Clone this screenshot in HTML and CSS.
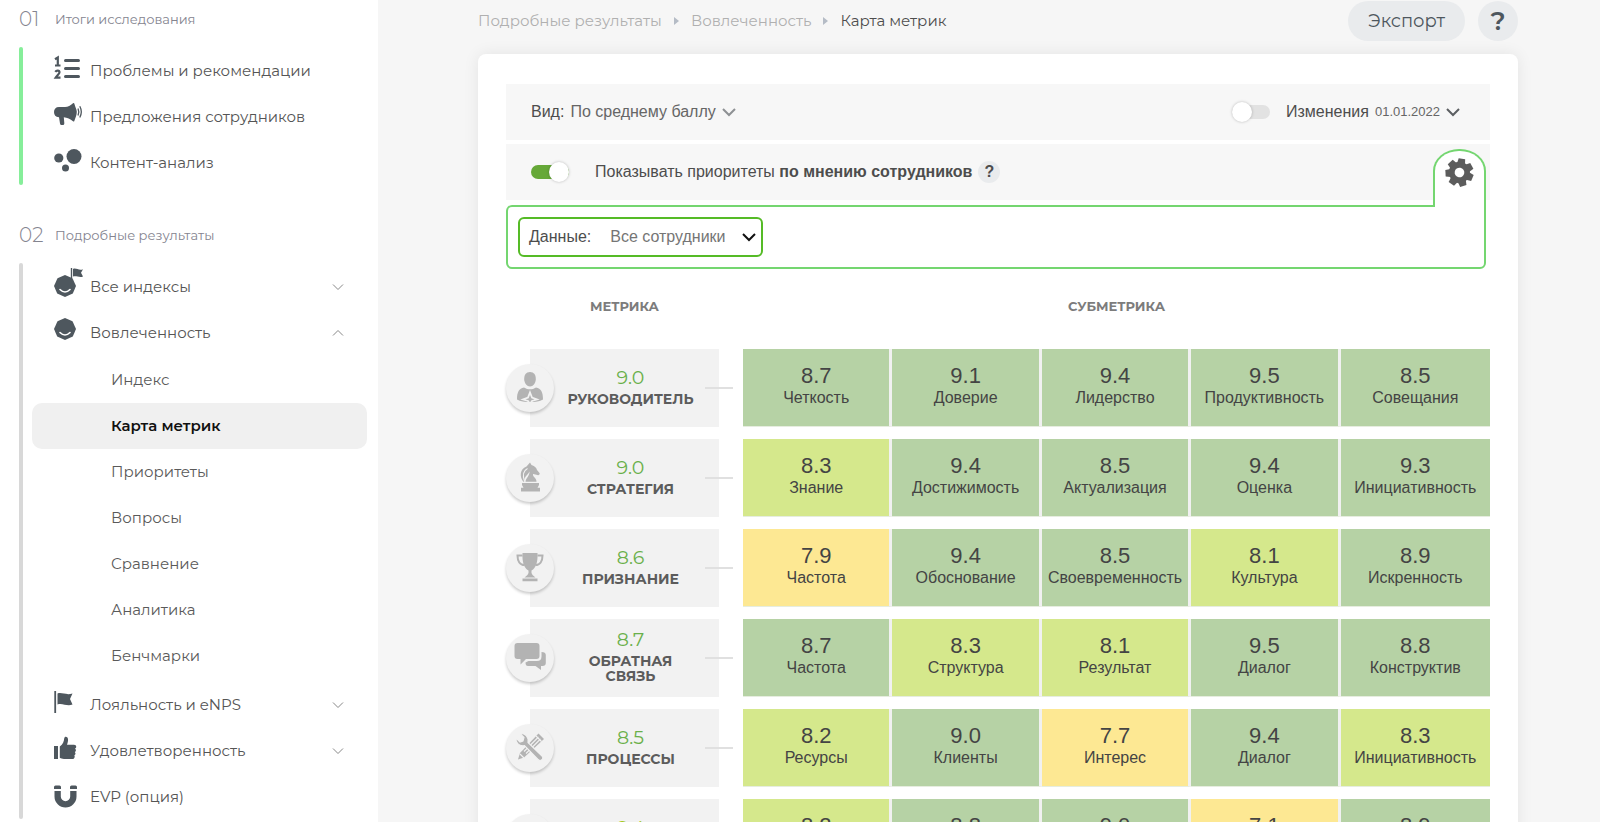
FILE: index.html
```html
<!DOCTYPE html>
<html lang="ru">
<head>
<meta charset="utf-8">
<meta name="viewport" content="width=device-width, initial-scale=1">
<title>Карта метрик</title>
<link rel="stylesheet" href="styles.css">
</head>
<body>
<div class="app">
  <nav class="sidebar" aria-label="Разделы">
    <section class="section">
      <h2 class="section-title"><span class="section-num">01</span>Итоги исследования</h2>
      <ul class="menu menu-active">
        <li><a class="item" href="#"><svg class="icon" viewBox="0 0 28 24"><g stroke="#4e575e" stroke-width="3" stroke-linecap="round"><path d="M11.500 4.500H24.500M11.500 12.500H24.500M11.500 20.500H24.500"/></g><path d="M1 3.200L3.800 1.500V9.300M1 9.500H6.500M1.300 15.800C2.500 14 5.500 14.200 5.500 16.300C5.500 18 3.500 19 1.700 21.700H6.500" fill="none" stroke="#4e575e" stroke-width="2.200"/></svg>Проблемы и рекомендации</a></li>
        <li><a class="item" href="#"><svg class="icon" viewBox="0 0 28 24"><path d="M5 5H11C14 5 16.500 3.500 19 1.200C19.500.8 20 .8 20.300 1.500C21.300 5 22.500 7 22.800 9.800C22.800 13 21.600 15.500 20.300 19C20 19.800 19.500 19.600 19 19.200C16.500 17 13 15.500 9.800 15.200L10.300 21C10.400 22.600 9.800 23 8.800 23H7.500C6.500 23 6.200 22.400 6 21.500L5 15.300C1.600 15 0 13 0 10C0 7 1.800 5 5 5Z" fill="#4e575e"/><path d="M24 6.500Q25.600 9.800 24 13.500M25.800 4.300Q28.800 9.800 25.800 15.500" fill="none" stroke="#4e575e" stroke-width="1.300"/></svg>Предложения сотрудников</a></li>
        <li><a class="item" href="#"><svg class="icon" viewBox="0 0 28 24"><g fill="#4e575e"><circle cx="4.800" cy="10" r="4.600"/><circle cx="20" cy="8.500" r="7.500"/><circle cx="11.500" cy="20" r="3.500"/></g></svg>Контент-анализ</a></li>
      </ul>
    </section>
    <section class="section">
      <h2 class="section-title"><span class="section-num">02</span>Подробные результаты</h2>
      <ul class="menu">
        <li><a class="item" href="#"><svg class="icon" viewBox="0 0 28 24"><path d="M11 3L18.500 6.200L22 14L18.800 21.500L11 25L3.200 21.500L0 14L3.500 6.200Z" fill="#4e575e"/><path d="M6 17.500Q11 22.500 16 17.500" fill="none" stroke="#fff" stroke-width="1.600" stroke-linecap="round"/><path d="M17.500 6V-4" stroke="#4e575e" stroke-width="1.400"/><path d="M19 -3C22 -4.500 25 -1 29 -2.800L27 .8L29 4.500C25.500 6 22.500 3.500 19 4.500Z" fill="#4e575e"/></svg>Все индексы<svg class="fold" viewBox="0 0 12 12"><path d="M1 3.500L6 8.500L11 3.500"/></svg></a></li>
        <li><a class="item" href="#"><svg class="icon" viewBox="0 0 28 24"><path d="M11 0L18.500 3.200L22 11L18.800 18.500L11 22L3.200 18.500L0 11L3.500 3.200Z" fill="#4e575e"/><path d="M6 14.500Q11 19.500 16 14.500" fill="none" stroke="#fff" stroke-width="1.600" stroke-linecap="round"/></svg>Вовлеченность<svg class="fold" viewBox="0 0 12 12"><path d="M1 8.500L6 3.500L11 8.500"/></svg></a>
          <ul class="submenu">
            <li><a class="subitem" href="#">Индекс</a></li>
            <li><a class="subitem current" href="#" aria-current="page">Карта метрик</a></li>
            <li><a class="subitem" href="#">Приоритеты</a></li>
            <li><a class="subitem" href="#">Вопросы</a></li>
            <li><a class="subitem" href="#">Сравнение</a></li>
            <li><a class="subitem" href="#">Аналитика</a></li>
            <li><a class="subitem" href="#">Бенчмарки</a></li>
          </ul></li>
        <li><a class="item" href="#"><svg class="icon" viewBox="0 0 28 24"><path d="M1.200 1V23" stroke="#4e575e" stroke-width="1.800"/><path d="M3.500 3.500C8 2 12 5.500 18.500 3.500L16 9L18.500 14.500C13 17 8.500 12.500 3.500 14.500Z" fill="#4e575e"/></svg>Лояльность и eNPS<svg class="fold" viewBox="0 0 12 12"><path d="M1 3.500L6 8.500L11 3.500"/></svg></a></li>
        <li><a class="item" href="#"><svg class="icon" viewBox="0 0 28 24"><path d="M0 10H4V23H0ZM5.800 10.500C9 8.500 10 5 10.200 2.500C10.400 0 13.500 0 14 3C14.300 5 13.500 7 13 8.800H20C22.800 8.800 22.800 12.300 21 12.600C22.500 13.500 22 15.800 20.800 16C22 17 21.500 19 20.300 19.200C21.300 20.500 20.300 23 18.500 23H10C8 23 7 22.300 5.800 21.800Z" fill="#4e575e"/></svg>Удовлетворенность<svg class="fold" viewBox="0 0 12 12"><path d="M1 3.500L6 8.500L11 3.500"/></svg></a></li>
        <li><a class="item" href="#"><svg class="icon" viewBox="0 0 28 24"><path d="M0 7V5Q0 3.500 1.500 3.500H5.500Q7 3.500 7 5V7ZM16 7V5Q16 3.500 17.500 3.500H21.500Q23 3.500 23 5V7ZM.5 9H6.800V14.500A4.700 4.700 0 0 0 16.200 14.500V9H22.500V14.500A11 11 0 0 1 .5 14.500Z" fill="#4e575e"/></svg>EVP (опция)</a></li>
      </ul>
    </section>
  </nav>

  <main class="main">
    <header class="topbar">
      <nav class="crumbs" aria-label="Навигация">
        <a href="#">Подробные результаты</a><span class="sep"></span><a href="#">Вовлеченность</a><span class="sep"></span><span class="here">Карта метрик</span>
      </nav>
      <button class="pill" type="button">Экспорт</button>
      <button class="pill round" type="button" aria-label="Помощь">?</button>
    </header>

    <div class="card">
      <div class="bar">
        <span>Вид:</span>
        <button class="drop" type="button">По среднему баллу<svg class="chev" viewBox="0 0 14 10"><path d="M1 2L7 8L13 2"/></svg></button>
        <label class="toggle-label end"><input class="toggle" type="checkbox">Изменения</label>
        <button class="drop date" type="button">01.01.2022<svg class="chev dark" viewBox="0 0 14 10"><path d="M1 2L7 8L13 2"/></svg></button>
      </div>
      <div class="bar">
        <label class="toggle-label wide"><input class="toggle" type="checkbox" checked><span>Показывать приоритеты <b>по мнению сотрудников</b></span></label>
        <button class="hint" type="button" aria-label="Подсказка">?</button>
      </div>
      <div class="filters">
        <button class="tab" type="button" aria-label="Настройки"><svg viewBox="-15 -15 30 30"><g fill="#5c5c5c" transform="rotate(10)"><circle r="8" fill="none" stroke="#5c5c5c" stroke-width="6"/><path d="M-4.200-9L-3.400-14.500H3.400L4.200-9Z"/><path d="M-4.200-9L-3.400-14.500H3.400L4.200-9Z" transform="rotate(51.400)"/><path d="M-4.200-9L-3.400-14.500H3.400L4.200-9Z" transform="rotate(102.900)"/><path d="M-4.200-9L-3.400-14.500H3.400L4.200-9Z" transform="rotate(154.300)"/><path d="M-4.200-9L-3.400-14.500H3.400L4.200-9Z" transform="rotate(205.700)"/><path d="M-4.200-9L-3.400-14.500H3.400L4.200-9Z" transform="rotate(257.100)"/><path d="M-4.200-9L-3.400-14.500H3.400L4.200-9Z" transform="rotate(308.600)"/></g></svg></button>
        <div class="select-box">
          <label for="data">Данные:</label>
          <select id="data"><option>Все сотрудники</option></select>
          <svg class="chev black" viewBox="0 0 14 10"><path d="M1 2L7 8L13 2"/></svg>
        </div>
      </div>

      <table class="map">
        <thead>
          <tr><th class="col-metric" scope="col">МЕТРИКА</th><th class="col-sub" scope="colgroup" colspan="5">СУБМЕТРИКА</th></tr>
        </thead>
        <tbody>
          <tr>
            <th scope="row"><div class="metric"><span class="badge"><svg viewBox="0 0 32 32"><path d="M16 0C20 0 22 3 21.800 7.500C21.500 11.500 19 14.500 16 14.500C13 14.500 10.500 11.500 10.200 7.500C10 3 12 0 16 0Z"/><path d="M10 15.500C12 16.800 14 17.300 16 17.300C18 17.300 20 16.800 22 15.500C27 16.500 29 20 29 27.500C26 29.500 21 30 16 30C11 30 6 29.500 3 27.500C3 20 5 16.500 10 15.500Z"/><path d="M16 20.500L18 25.500L23 27.500L18 29L16 32L14 29L9 27.500L14 25.500Z" fill="#b3b3b3" stroke="#f2f2f2" stroke-width="1.800"/></svg></span><span class="score">9.0</span><span class="name">РУКОВОДИТЕЛЬ</span></div></th>
            <td class="good"><b>8.7</b>Четкость</td><td class="good"><b>9.1</b>Доверие</td><td class="good"><b>9.4</b>Лидерство</td><td class="good"><b>9.5</b>Продуктивность</td><td class="good"><b>8.5</b>Совещания</td>
          </tr>
          <tr>
            <th scope="row"><div class="metric"><span class="badge"><svg viewBox="0 0 32 32"><path d="M16 .5L17.500 3C21 4 22.500 6 23 8L25.700 11.300C25.500 13.500 24 13.500 22.500 12.700L19 12C18.500 15 22.500 15.500 22.500 19.800H11.500C12 15.500 15.500 14.500 15.500 9.500C14.500 12 12 13.500 10.800 16L10.200 19.500L9.300 19.800C5.500 15 5.500 7 12.500 4.500Z"/><path d="M13.500 6.500C9 9 8.700 14 10.500 19" fill="none" stroke="#f2f2f2" stroke-width="1.100"/><path d="M8 21H25V23L23.500 25.700H26V29.500H7V25.700H9.500L8 23Z"/></svg></span><span class="score">9.0</span><span class="name">СТРАТЕГИЯ</span></div></th>
            <td class="fair"><b>8.3</b>Знание</td><td class="good"><b>9.4</b>Достижимость</td><td class="good"><b>8.5</b>Актуализация</td><td class="good"><b>9.4</b>Оценка</td><td class="good"><b>9.3</b>Инициативность</td>
          </tr>
          <tr>
            <th scope="row"><div class="metric"><span class="badge"><svg viewBox="0 0 32 32"><path d="M8.500 1H23.500C24 10 22 16 17.500 18.500V21Q18 23.500 21.500 25.500H10.500Q14 23.500 14.500 21V18.500C10 16 8 10 8.500 1ZM8.500 26.500H23.500V29.300H8.500Z"/><path d="M8.500 3.500H3.500C3.500 9 6 13 10.500 13M23.500 3.500H28.500C28.500 9 26 13 21.500 13" fill="none" stroke="#b3b3b3" stroke-width="2"/></svg></span><span class="score">8.6</span><span class="name">ПРИЗНАНИЕ</span></div></th>
            <td class="mid"><b>7.9</b>Частота</td><td class="good"><b>9.4</b>Обоснование</td><td class="good"><b>8.5</b>Своевременность</td><td class="fair"><b>8.1</b>Культура</td><td class="good"><b>8.9</b>Искренность</td>
          </tr>
          <tr>
            <th scope="row"><div class="metric"><span class="badge"><svg viewBox="0 0 32 32"><path d="M3.500 1H22.500Q25.500 1 25.500 4V14Q25.500 17 22.500 17H12L6.500 22.500V17H3.500Q.5 17 .5 14V4Q.5 1 3.500 1Z"/><path d="M27.500 10Q31.800 10 31.800 13V21Q31.800 24 28.500 24H27V28L21.500 24H14Q11.500 24 11.500 20.500L14.500 19H23Q27.500 19 27.500 14.500Z"/></svg></span><span class="score">8.7</span><span class="name">ОБРАТНАЯ СВЯЗЬ</span></div></th>
            <td class="good"><b>8.7</b>Частота</td><td class="fair"><b>8.3</b>Структура</td><td class="fair"><b>8.1</b>Результат</td><td class="good"><b>9.5</b>Диалог</td><td class="good"><b>8.8</b>Конструктив</td>
          </tr>
          <tr>
            <th scope="row"><div class="metric"><span class="badge"><svg viewBox="0 0 32 32"><path d="M24.500 1.500L30 7L10 25.500L4 27.500L6 21Z"/><path d="M22 4L27.500 9.500M24.500 5L10 19.500M26.500 7L12 21.500M6 22L10 26" stroke="#f2f2f2" stroke-width="1.100"/><path d="M6 1.500L10 5.500L9 9L6 10L2 6C1.500 11 5 14.500 10.500 13.500L24 27.500C26.500 30 30.500 26.500 28 24L14 10.500C15 5 11 1 6 1.500Z" stroke="#f2f2f2" stroke-width="1.100"/></svg></span><span class="score">8.5</span><span class="name">ПРОЦЕССЫ</span></div></th>
            <td class="fair"><b>8.2</b>Ресурсы</td><td class="good"><b>9.0</b>Клиенты</td><td class="mid"><b>7.7</b>Интерес</td><td class="good"><b>9.4</b>Диалог</td><td class="fair"><b>8.3</b>Инициативность</td>
          </tr>
          <tr>
            <th scope="row"><div class="metric"><span class="badge"></span><span class="score low">8.4</span><span class="name">УСЛОВИЯ</span></div></th>
            <td class="fair"><b>8.2</b>Комфорт</td><td class="good"><b>8.8</b>График</td><td class="good"><b>9.0</b>Режим</td><td class="mid"><b>7.1</b>Доход</td><td class="good"><b>8.9</b>Баланс</td>
          </tr>
        </tbody>
      </table>
    </div>
  </main>
</div>
</body>
</html>
```

FILE: styles.css
```css
* { box-sizing: border-box; }
body {
  margin: 0;
  background: #f6f6f6;
  color: #4d4d4d;
  font: 16px/20px "Liberation Sans", Arial, sans-serif;
}
a { color: inherit; text-decoration: none; }
button, select { font: inherit; color: inherit; border: 0; background: none; padding: 0; cursor: pointer; }
ul { list-style: none; margin: 0; padding: 0; }
svg { display: block; overflow: visible; }

.app { display: flex; height: 100vh; overflow: hidden; }

/* Sidebar */
.sidebar {
  flex: 0 0 378px;
  min-height: 100%;
  padding: 9px 11px 0 19px;
  background: #fff;
  font-family: Montserrat, Inter, sans-serif;
  font-size: 15px;
}
.section { margin-bottom: 40px; }
.section-title {
  display: flex;
  align-items: center;
  height: 20px;
  margin: 0 0 18px;
  font-size: 13px;
  font-weight: 400;
  color: #84848f;
}
.section-num { width: 36px; font-size: 20px; font-weight: 300; }
.menu { position: relative; padding-left: 13px; }
.menu::before {
  content: "";
  position: absolute;
  inset: 0 auto 0 0;
  width: 4px;
  border-radius: 2px;
  background: #d8d8d8;
}
.menu-active::before { background: #86ee9a; }
.item {
  display: flex;
  align-items: center;
  height: 46px;
  padding: 2px 23px 0 22px;
  color: #555;
}
.icon { width: 28px; height: 24px; margin: 0 8px 6px 0; }
.fold { width: 12px; height: 12px; margin-left: auto; }
.fold path { fill: none; stroke: #888; stroke-width: 1; }
.submenu { padding: 2px 0; }
.subitem {
  display: flex;
  align-items: center;
  height: 46px;
  padding-left: 79px;
  border-radius: 10px;
  color: #5a5a5a;
}
.current { background: #f0f0f0; color: #111; font-weight: 600; }

/* Main column */
.main { flex: 1; min-width: 0; padding: 1px 82px 0 100px; }
.topbar {
  display: flex;
  align-items: center;
  gap: 13px;
  height: 40px;
  margin-bottom: 13px;
  font-family: Montserrat, Inter, sans-serif;
  font-size: 15px;
}
.crumbs { display: flex; align-items: center; flex: 1; color: #b0b0b0; }
.here { color: #4d4d4d; }
.sep {
  margin: 0 12px;
  border: solid transparent;
  border-width: 4px 0 4px 5px;
  border-left-color: #b5bcc6;
}
.pill {
  height: 40px;
  padding: 0 20px;
  border-radius: 20px;
  background: #e9ebed;
  color: #4e575e;
  font-size: 18px;
}
.round { width: 40px; padding: 0; font-size: 26px; font-weight: 600; }

.card {
  padding: 30px 28px;
  border-radius: 8px;
  background: #fff;
  box-shadow: 0 0 16px rgba(0, 0, 0, .08);
}
.bar {
  display: flex;
  align-items: center;
  gap: 6px;
  height: 56px;
  margin-bottom: 4px;
  padding: 0 30px 0 25px;
  background: #f7f7f7;
}
.drop { display: flex; align-items: center; gap: 6px; color: #666; }
.date { font-size: 13px; }
.chev { width: 14px; height: 10px; }
.chev path { fill: none; stroke: #8e9194; stroke-width: 2; }
.chev.dark path { stroke: #5c5f62; }
.chev.black path { stroke: #111; }
.end { margin-left: auto; }
.toggle-label { display: flex; align-items: center; gap: 16px; cursor: pointer; }
.wide { gap: 26px; }
.toggle {
  appearance: none;
  display: flex;
  align-items: center;
  width: 38px;
  height: 14px;
  margin: 0;
  border-radius: 7px;
  background: #e2e2e2;
}
.toggle::before {
  content: "";
  width: 20px;
  height: 20px;
  border-radius: 50%;
  background: #fff;
  box-shadow: 0 0 3px rgba(0, 0, 0, .25);
}
.toggle:checked { justify-content: flex-end; background: #66a838; }
.hint {
  width: 22px;
  height: 22px;
  border-radius: 50%;
  background: #e9ebed;
  font-weight: 700;
}

.filters {
  position: relative;
  margin: 5px 4px 0 0;
  padding: 10px;
  border: 2px solid #74d670;
  border-radius: 6px;
  border-top-right-radius: 0;
  background: #fff;
}
.tab {
  position: absolute;
  right: -2px;
  bottom: 100%;
  display: flex;
  justify-content: center;
  width: 53px;
  height: 58px;
  padding-top: 7px;
  border: 2px solid #74d670;
  border-bottom: 0;
  border-radius: 26px 26px 0 0 / 22px 22px 0 0;
  background: #fff;
}
.tab svg { width: 29px; height: 29px; }
.select-box {
  display: inline-flex;
  align-items: center;
  width: 245px;
  height: 40px;
  padding: 0 5px 0 9px;
  border: 2px solid #55bb26;
  border-radius: 6px;
  vertical-align: top;
}
.select-box select {
  appearance: none;
  flex: 1;
  margin-left: 19px;
  color: #757575;
  outline: 0;
}

/* Metric map */
.map { display: block; }
.map thead, .map tbody { display: block; }
.map tr { display: grid; grid-template-columns: 237px repeat(5, 1fr); }
.map tbody tr { height: 78px; margin-bottom: 12px; }
.map th, .map td { padding: 0; }
.map thead th {
  padding: 27px 0 33px;
  color: #7c7c7c;
  font: 700 13px/20px Montserrat, Inter, sans-serif;
}
.map .col-sub { grid-column: 2 / -1; }
.metric {
  position: relative;
  display: flex;
  flex-direction: column;
  align-items: center;
  justify-content: center;
  height: 78px;
  margin: 0 24px;
  padding: 0 20px 4px 32px;
  background: #f2f2f2;
  font-family: Montserrat, Inter, sans-serif;
}
.metric::after {
  content: "";
  position: absolute;
  right: -14px;
  top: 38px;
  width: 28px;
  height: 2px;
  background: #e0e0e0;
}
.badge {
  position: absolute;
  left: -24px;
  top: 15px;
  width: 48px;
  height: 48px;
  padding: 8px;
  border-radius: 50%;
  background: #f2f2f2;
  box-shadow: 0 2px 3px rgba(0, 0, 0, .2);
}
.badge svg { width: 32px; height: 32px; fill: #b3b3b3; }
.score { margin-bottom: 2px; color: #6ab04a; font-size: 19px; font-weight: 400; line-height: 24px; }
.score.low { color: #a5c820; }
.name { max-width: 130px; color: #5c5c5c; font-size: 14px; font-weight: 700; line-height: 15px; }
.map td {
  display: flex;
  flex-direction: column;
  align-items: center;
  padding-top: 16px;
  border-right: 3px solid #f1f1f1;
  border-bottom: 1px solid #e6eddf;
  color: #444;
}
.map td:last-child { border-right: 0; }
.map td b { font-size: 22px; font-weight: 400; line-height: 22px; margin-bottom: 1px; }
.good { background: #b6d2a5; }
.fair { background: #d5e88c; }
.mid { background: #fde893; }
```
